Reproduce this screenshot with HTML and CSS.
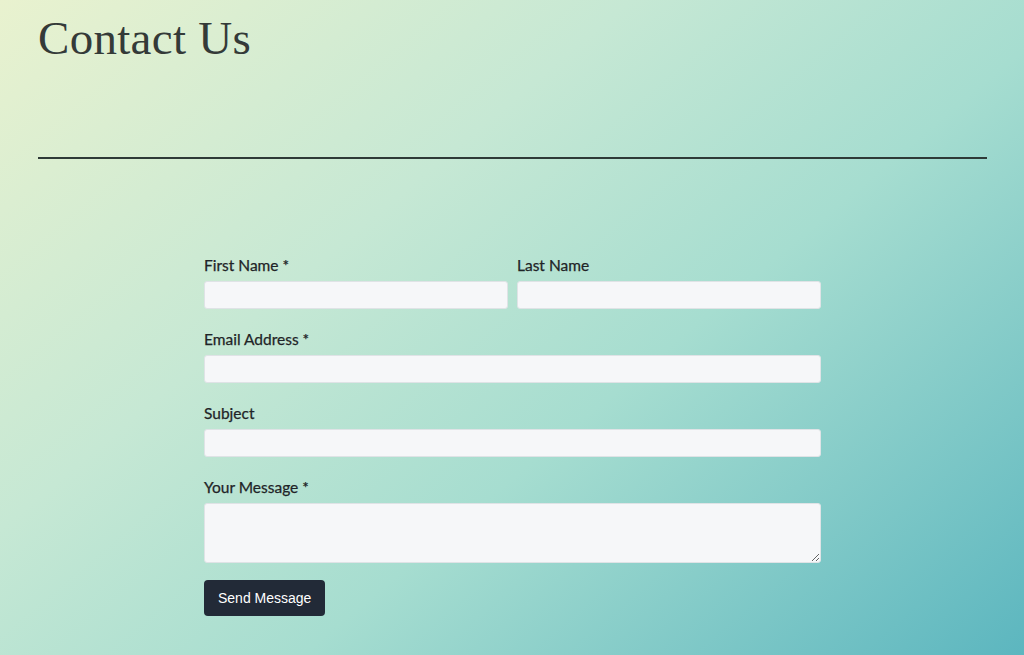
FILE: index.html
```html
<!DOCTYPE html>
<html lang="en">
<head>
  <meta charset="UTF-8">
  <title>Contact Us</title>
  <link rel="stylesheet" href="styles.css">
</head>
<body>

  <div class="page">
    <h1 class="title">Contact Us</h1>
    <hr class="rule">

    <form class="contact-form">
      <div class="row">
        <div class="field">
          <label for="first">First Name *</label>
          <input id="first" type="text">
        </div>
        <div class="field">
          <label for="last">Last Name</label>
          <input id="last" type="text">
        </div>
      </div>
      <div class="field">
        <label for="email">Email Address *</label>
        <input id="email" type="email">
      </div>
      <div class="field">
        <label for="subject">Subject</label>
        <input id="subject" type="text">
      </div>
      <div class="field">
        <label for="message">Your Message *</label>
        <textarea id="message"></textarea>
      </div>
      <button type="button" class="send">Send Message</button>
    </form>
  </div>

</body>
</html>
```

FILE: styles.css
```css
html, body {
  margin: 0;
  height: 100%;
}
body {
  background: linear-gradient(140deg, #e9f2cf 0%, #c6e8d4 35%, #a6ddd0 60%, #5cb6bf 100%);
  font-family: Lato, "Open Sans", sans-serif;
  color: #2a2f33;
  overflow: hidden;
}
.page {
  padding: 0 37px 0 38px;
}
.title {
  margin: 0;
  padding-top: 11px;
  font-family: "Liberation Serif", "DejaVu Serif", serif;
  font-weight: 400;
  font-size: 47px;
  line-height: 54px;
  letter-spacing: 0.3px;
  color: #343a38;
}
.rule {
  margin: 92px 0 0;
  border: none;
  border-top: 2px solid #2e3a37;
  height: 0;
}
.contact-form {
  width: 617px;
  margin: 96px 0 0 166px;
  display: flex;
  flex-direction: column;
  gap: 20px;
}
.row {
  display: flex;
  gap: 9px;
}
.row .field {
  flex: 1;
}
.field {
  display: flex;
  flex-direction: column;
}
.field label {
  font-size: 15.5px;
  line-height: 20px;
  margin-bottom: 6px;
  color: #1f2427;
  -webkit-text-stroke: 0.25px #1f2427;
}
.field input, .field textarea {
  box-sizing: border-box;
  width: 100%;
  height: 28px;
  border: 1px solid #dfe3e6;
  border-radius: 3px;
  background: #f6f7f9;
  font-size: 14px;
  padding: 4px 8px;
  outline: none;
}
.field textarea {
  height: 60px;
  resize: vertical;
  font-family: inherit;
}
.send {
  align-self: flex-start;
  margin-top: -3px;
  height: 36px;
  padding: 0 14px;
  background: #222a37;
  color: #fff;
  border: none;
  border-radius: 4px;
  font-family: "Liberation Sans", Arial, sans-serif;
  font-size: 14px;
  cursor: pointer;
}
```
